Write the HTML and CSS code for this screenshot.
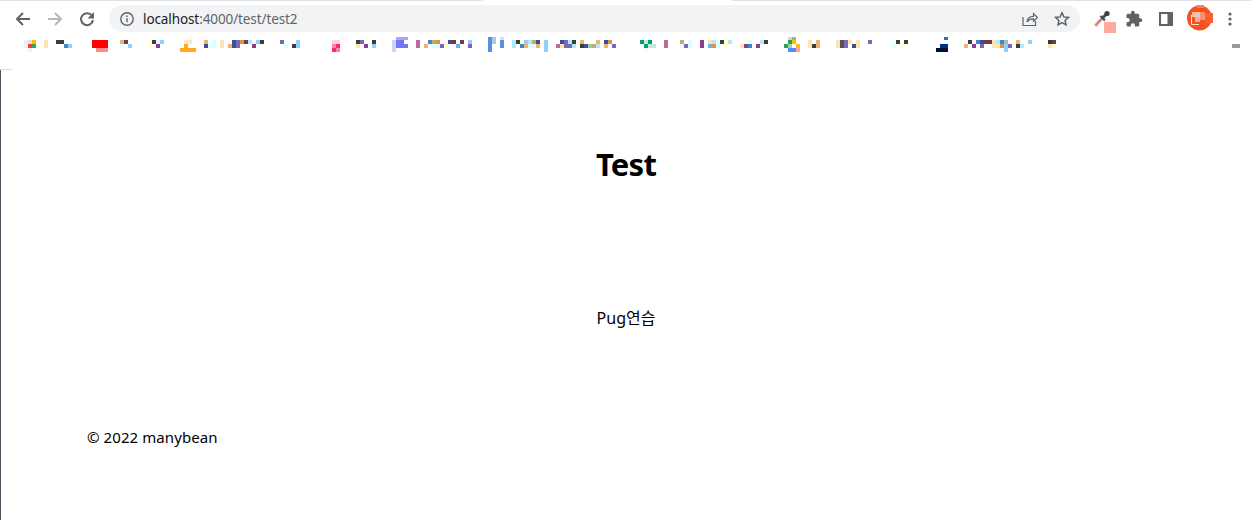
FILE: index.html
```html
<!DOCTYPE html>
<html lang="en">
<head>
  <meta charset="UTF-8" />
  <title>Test</title>
  <link rel="stylesheet" href="styles.css">
</head>
<body>

  <!-- Browser toolbar -->
  <div class="toolbar">
    <span class="tool-btn">
      <svg width="16" height="16" viewBox="0 0 16 16" fill="none" stroke="#5f6368" stroke-width="2"><path d="M15 8H2M8 2L2 8l6 6"/></svg>
    </span>
    <span class="tool-btn">
      <svg width="16" height="16" viewBox="0 0 16 16" fill="none" stroke="#b4b6b9" stroke-width="2"><path d="M1 8h13M8 2l6 6-6 6"/></svg>
    </span>
    <span class="tool-btn">
      <svg width="16" height="16" viewBox="0 0 16 16" fill="none" stroke="#5f6368" stroke-width="2"><path d="M13 4.800A6 6 0 1 0 14 9"/><path d="M15 1v6.500H8.500" fill="#5f6368" stroke="none"/></svg>
    </span>

    <div class="omnibox">
      <svg width="14" height="14" viewBox="0 0 14 14" fill="none" stroke="#5f6368" stroke-width="1.4"><circle cx="7" cy="7" r="6.200"/><path d="M7 6.200v4M7 3.400v1.500"/></svg>
      <span class="url">localhost<span class="url-path">:4000/test/test2</span></span>
      <span class="omni-actions">
        <span class="tool-btn">
          <svg width="16" height="16" viewBox="0 0 16 16" fill="none" stroke="#5f6368" stroke-width="1.200"><path d="M1 6v8.500h12.500V10"/><path d="M5 11c.4-3.600 3-5.600 6.500-5.600V2.600L15.500 6.500l-4 3.800V7.800C8.800 7.700 6.500 8.800 5 11z"/></svg>
        </span>
        <span class="tool-btn">
          <svg width="16" height="16" viewBox="0 0 16 16" fill="none" stroke="#5f6368" stroke-width="1.500"><path d="M8 1.800l1.900 4.100 4.500.5-3.300 3 .9 4.400L8 11.600l-4 2.200.9-4.400-3.300-3 4.500-.5z"/></svg>
        </span>
      </span>
    </div>

    <div class="extensions">
      <span class="tool-btn badge-host">
        <svg width="18" height="18" viewBox="0 0 18 18">
          <path d="M2 16L8.500 9" stroke="#eec4c4" stroke-width="4"/>
          <path d="M2.500 15.500L8 9.500" stroke="#d06060" stroke-width="1.200"/>
          <path d="M8.500 9L13 4.500" stroke="#4a4e52" stroke-width="3"/>
          <path d="M7.500 6L12 10.500" stroke="#4a4e52" stroke-width="2.200"/>
          <circle cx="14" cy="3.500" r="2.600" fill="#3c4043"/>
        </svg>
        <span class="ext-badge"></span>
      </span>
      <span class="tool-btn">
        <svg width="18" height="18" viewBox="0 0 24 24" fill="#5f6368"><path d="M20.500 11H19V7c0-1.100-.9-2-2-2h-4V3.500C13 2.120 11.880 1 10.500 1S8 2.120 8 3.500V5H4c-1.100 0-1.990.9-1.990 2v3.800H3.500c1.490 0 2.700 1.210 2.700 2.700s-1.210 2.700-2.700 2.700H2V20c0 1.100.9 2 2 2h3.800v-1.500c0-1.490 1.210-2.700 2.700-2.700 1.490 0 2.700 1.210 2.700 2.700V22H17c1.100 0 2-.9 2-2v-4h1.500c1.380 0 2.500-1.120 2.500-2.500S21.880 11 20.500 11z"/></svg>
      </span>
      <span class="tool-btn">
        <svg width="14" height="14" viewBox="0 0 14 14"><path fill="#5f6368" fill-rule="evenodd" d="M0 0h14v14H0zM2 2v10h6.500V2z"/></svg>
      </span>
      <span class="tool-btn avatar">
        <svg width="26" height="26" viewBox="0 0 26 26">
          <circle cx="12.500" cy="13" r="12.500" fill="#f4511e"/>
          <path d="M10 0h7v3h-7z" fill="#fa8050"/>
          <path d="M18 8h8v10h-8z" fill="#f86030"/>
          <path d="M5 7h8v5H5z" fill="#f8c0b0"/>
          <path d="M13 7h5v8h-5z" fill="#fa9070"/>
          <path d="M8 12h5v5H8z" fill="#f9b09a"/>
          <path d="M4.500 10v9.500H12" fill="none" stroke="#fde0d4"/>
        </svg>
      </span>
      <span class="tool-btn">
        <svg width="4" height="14" viewBox="0 0 4 14" fill="#5f6368"><circle cx="2" cy="2" r="1.600"/><circle cx="2" cy="7" r="1.600"/><circle cx="2" cy="12" r="1.600"/></svg>
      </span>
    </div>
  </div>

  <!-- Bookmarks, blurred into blocks in the screenshot -->
  <div class="bookmarks">
    <svg class="mosaic" width="1251" height="32" viewBox="0 37 1251 32">
      <g fill="#3c3c3c">
        <rect x="56" y="40"/><rect x="60" y="40"/><rect x="152" y="40"/><rect x="260" y="40"/><rect x="292" y="44"/>
        <rect x="356" y="40"/><rect x="372" y="40"/><rect x="516" y="40"/><rect x="572" y="40"/><rect x="580" y="44"/>
        <rect x="720" y="40"/><rect x="764" y="40"/><rect x="812" y="44"/><rect x="896" y="40"/><rect x="904" y="40"/>
        <rect x="968" y="40"/><rect x="1016" y="44"/><rect x="1048" y="40"/>
      </g>
      <g fill="#f0b070">
        <rect x="120" y="40"/><rect x="204" y="40"/><rect x="228" y="44"/><rect x="424" y="44"/><rect x="524" y="44"/>
        <rect x="536" y="44"/><rect x="580" y="40"/><rect x="596" y="40"/><rect x="604" y="44"/><rect x="816" y="40"/>
        <rect x="816" y="44"/><rect x="964" y="44"/><rect x="1016" y="40"/>
      </g>
      <g fill="#ffe4b0">
        <rect x="44" y="40"/><rect x="44" y="44"/><rect x="220" y="40"/><rect x="220" y="44"/><rect x="356" y="44"/>
        <rect x="560" y="44"/><rect x="708" y="40"/><rect x="740" y="44"/><rect x="808" y="40"/><rect x="808" y="44"/>
        <rect x="836" y="40"/><rect x="836" y="44"/><rect x="848" y="40"/><rect x="856" y="40"/><rect x="856" y="44"/>
        <rect x="992" y="40"/><rect x="992" y="44"/><rect x="996" y="44"/><rect x="1048" y="44"/>
      </g>
      <g fill="#ffffd0">
        <rect x="148" y="40"/><rect x="148" y="44"/><rect x="444" y="44"/><rect x="520" y="40"/>
        <rect x="724" y="40"/><rect x="724" y="44"/><rect x="744" y="40"/><rect x="900" y="44"/><rect x="1052" y="44"/>
      </g>
      <g fill="#90d0ff">
        <rect x="68" y="44"/><rect x="128" y="44"/><rect x="160" y="40"/><rect x="256" y="40"/><rect x="296" y="40"/>
        <rect x="296" y="44"/><rect x="372" y="44"/><rect x="468" y="40"/><rect x="524" y="40"/><rect x="544" y="40"/>
        <rect x="544" y="44"/><rect x="544" y="48"/><rect x="1004" y="44"/><rect x="1004" y="48"/><rect x="1028" y="40"/>
      </g>
      <g fill="#b0e8ff">
        <rect x="248" y="40"/><rect x="512" y="40"/><rect x="512" y="44"/><rect x="528" y="40"/>
        <rect x="568" y="40"/><rect x="572" y="44"/><rect x="596" y="44"/><rect x="712" y="40"/><rect x="728" y="40"/>
        <rect x="760" y="40"/><rect x="996" y="40"/><rect x="1020" y="44"/>
      </g>
      <g fill="#dcffff">
        <rect x="120" y="44"/><rect x="156" y="40"/><rect x="208" y="44"/><rect x="212" y="40"/><rect x="212" y="44"/>
        <rect x="284" y="44"/><rect x="432" y="44"/><rect x="436" y="44"/><rect x="528" y="44"/><rect x="532" y="44"/>
        <rect x="688" y="40"/><rect x="680" y="44"/><rect x="688" y="44"/><rect x="716" y="40"/><rect x="716" y="44"/>
        <rect x="748" y="40"/><rect x="892" y="44"/>
      </g>
      <g fill="#7868b8">
        <rect x="236" y="40"/><rect x="236" y="44"/><rect x="280" y="40"/><rect x="360" y="40"/><rect x="440" y="44"/>
        <rect x="468" y="44"/><rect x="564" y="40"/><rect x="564" y="44"/><rect x="568" y="44"/><rect x="612" y="44"/>
        <rect x="684" y="44"/><rect x="844" y="40"/><rect x="844" y="44"/><rect x="868" y="40"/><rect x="980" y="44"/><rect x="1008" y="44"/>
      </g>
      <g fill="#8c3c8c">
        <rect x="156" y="44"/><rect x="252" y="44"/><rect x="364" y="44"/><rect x="700" y="40"/><rect x="700" y="44"/>
        <rect x="756" y="44"/><rect x="972" y="44"/><rect x="744" y="44"/>
      </g>
      <g fill="#b86c98">
        <rect x="416" y="40"/><rect x="416" y="44"/><rect x="556" y="44"/><rect x="664" y="40"/><rect x="664" y="44"/>
      </g>
      <g fill="#3c88c8">
        <rect x="64" y="44"/><rect x="428" y="40"/><rect x="520" y="44"/><rect x="748" y="44"/><rect x="976" y="40"/><rect x="1000" y="40"/>
      </g>
      <g fill="#3c5090">
        <rect x="204" y="44"/><rect x="232" y="40"/><rect x="232" y="44"/><rect x="448" y="40"/><rect x="536" y="40"/>
        <rect x="560" y="40"/><rect x="584" y="44"/><rect x="604" y="40"/><rect x="852" y="44"/><rect x="980" y="40"/>
      </g>
      <g fill="#703c48">
        <rect x="124" y="40"/><rect x="244" y="40"/><rect x="452" y="40"/><rect x="460" y="40"/><rect x="984" y="40"/><rect x="988" y="40"/><rect x="1052" y="40"/>
      </g>
      <g fill="#b8b070">
        <rect x="432" y="40"/><rect x="532" y="40"/><rect x="592" y="44"/><rect x="680" y="40"/>
      </g>
      <g fill="#dc9444">
        <rect x="240" y="40"/><rect x="436" y="40"/><rect x="608" y="40"/><rect x="712" y="44"/><rect x="1000" y="44"/>
      </g>
      <rect x="708" y="44" fill="#70b0e8"/><rect x="456" y="44" fill="#70b0e8"/>
      <rect x="840" y="40" fill="#505058"/><rect x="840" y="44" fill="#505058"/>
      <rect x="588" y="44" fill="#a0c8a0"/><rect x="1004" y="40" fill="#a0c0c0"/>

      <!-- favicons -->
      <rect x="24" y="40" fill="#eee"/><rect x="28" y="40" fill="#d8e0f0"/><rect x="32" y="40" fill="#fbbc05"/>
      <rect x="24" y="44" fill="#f0f0ff"/><rect x="28" y="44" fill="#ea4335"/><rect x="32" y="44" fill="#34a853"/><rect x="28" y="48" fill="#f0f5f0"/>

      <path fill="#f00" d="M92 40h16v8H92z"/><path fill="#ff8a8a" d="M96 48h12v4H96z"/>

      <path fill="#fff5e8" d="M188 36h4v4h-4z"/><path fill="#ffe8c8" d="M184 40h8v4h-8z"/>
      <path fill="#ffa820" d="M184 44h4v4h-4zM180 48h16v4h-16z"/>

      <path fill="#fff0f5" d="M340 36h4v4h-4z"/><path fill="#ffd0e0" d="M332 40h8v4h-8z"/>
      <path fill="#ff80a8" d="M332 44h4v4h-4zM336 48h4v4h-4z"/><path fill="#ff2868" d="M336 44h4v4h-4zM332 48h4v4h-4z"/>

      <path fill="#a0a8f8" d="M396 36h12v4h-12z"/><path fill="#7078f8" d="M396 40h8v4h-8zM396 44h12v4h-12z"/><path fill="#d0d0ff" d="M392 40h4v12h-4z"/>

      <path fill="#5890e0" d="M488 36h4v16h-4zM500 40h4v8h-4z"/><path fill="#a8c8f0" d="M492 36h4v8h-4z"/><path fill="#d0e0f8" d="M500 36h4v4h-4z"/>

      <path fill="#00a070" d="M640 40h4v4h-4zM648 40h4v4h-4zM644 44h4v4h-4z"/><path fill="#c4e8d8" d="M644 40h4v4h-4zM648 44h8v4h-8z"/><path fill="#f0fff8" d="M644 48h4v4h-4z"/>

      <path fill="#c8e0d0" d="M788 36h4v4h-4z"/><path fill="#80c090" d="M792 36h4v4h-4z"/><path fill="#30a050" d="M788 40h4v4h-4zM784 44h4v4h-4z"/>
      <path fill="#fbbc05" d="M792 40h4v4h-4zM796 44h4v4h-4z"/><path fill="#a0d0a8" d="M788 44h4v4h-4z"/><path fill="#4a90f8" d="M788 48h8v4h-8z"/><path fill="#ffa0a0" d="M796 48h4v4h-4z"/>

      <path fill="#0080d0" d="M944 36h4v4h-4z"/><path fill="#003090" d="M940 44h8v4h-8z"/><path fill="#001030" d="M936 48h12v4h-12z"/>

      <path fill="#999" d="M1232 44h8v4h-8z"/>
    </svg>
  </div>

  <!-- Page content -->
  <div class="page">
    <div class="content">
      <h1>Test</h1>
      <p>Pug연습</p>
    </div>
    <footer class="site-footer">© 2022 manybean</footer>
  </div>

</body>
</html>
```

FILE: styles.css
```css
* {
  box-sizing: border-box;
}

html,
body {
  height: 100%;
}

body {
  margin: 0;
  display: flex;
  flex-direction: column;
  overflow: hidden;
  background: #fff;
  color: #000;
  font-family: "Noto Sans", "Noto Sans CJK KR", sans-serif;
}

/* tab strip shows as a thin line on top, with a gap over the active tab */
.toolbar {
  display: flex;
  align-items: center;
  height: 37px;
  padding: 0 5px 0 7px;
  background: linear-gradient(to right, #dee1e6 480px, #fff 484px, #fff 730px, #dee1e6 734px) top / 100% 1px no-repeat;
  flex: none;
}

.tool-btn {
  display: flex;
  align-items: center;
  justify-content: center;
  width: 32px;
  height: 32px;
  flex: none;
}

.omnibox {
  flex: 1;
  display: flex;
  align-items: center;
  gap: 9px;
  height: 27px;
  margin: 0 6px;
  padding: 0 2px 0 11px;
  border-radius: 14px;
  background: #f1f3f4;
}

.url {
  font-size: 13.5px;
  letter-spacing: -0.1px;
  color: #202124;
}

.url-path {
  color: #5f6368;
}

.omni-actions {
  display: flex;
  margin-left: auto;
}

.extensions {
  display: flex;
}

.badge-host {
  position: relative;
}

.ext-badge {
  position: absolute;
  left: 18px;
  top: 19px;
  width: 12px;
  height: 11px;
  background: #ffaaa0;
}

.avatar svg {
  margin: 0 0 2px 3px;
}

.bookmarks {
  position: relative;
  height: 33px;
  flex: none;
}

/* the short line left of the page, at the bar's bottom */
.bookmarks::after {
  content: "";
  position: absolute;
  left: 0;
  bottom: 0;
  width: 12px;
  height: 1px;
  background: #dadce0;
}

.mosaic {
  display: block;
}

.mosaic rect {
  width: 4px;
  height: 4px;
}

.page {
  flex: 1;
  border-left: 1px solid #50505f;
}

.content {
  display: flex;
  flex-direction: column;
  align-items: center;
  padding-top: 73px;
}

h1 {
  margin: 0;
  font-size: 31px;
  line-height: 43px;
  font-weight: 700;
  letter-spacing: -0.75px;
}

.content p {
  margin: 122px 0 0;
  font-size: 16px;
  line-height: 21px;
}

.site-footer {
  margin-top: 98px;
  padding-left: 86px;
  font-size: 15px;
  line-height: 21px;
  letter-spacing: 0.09px;
}
```
